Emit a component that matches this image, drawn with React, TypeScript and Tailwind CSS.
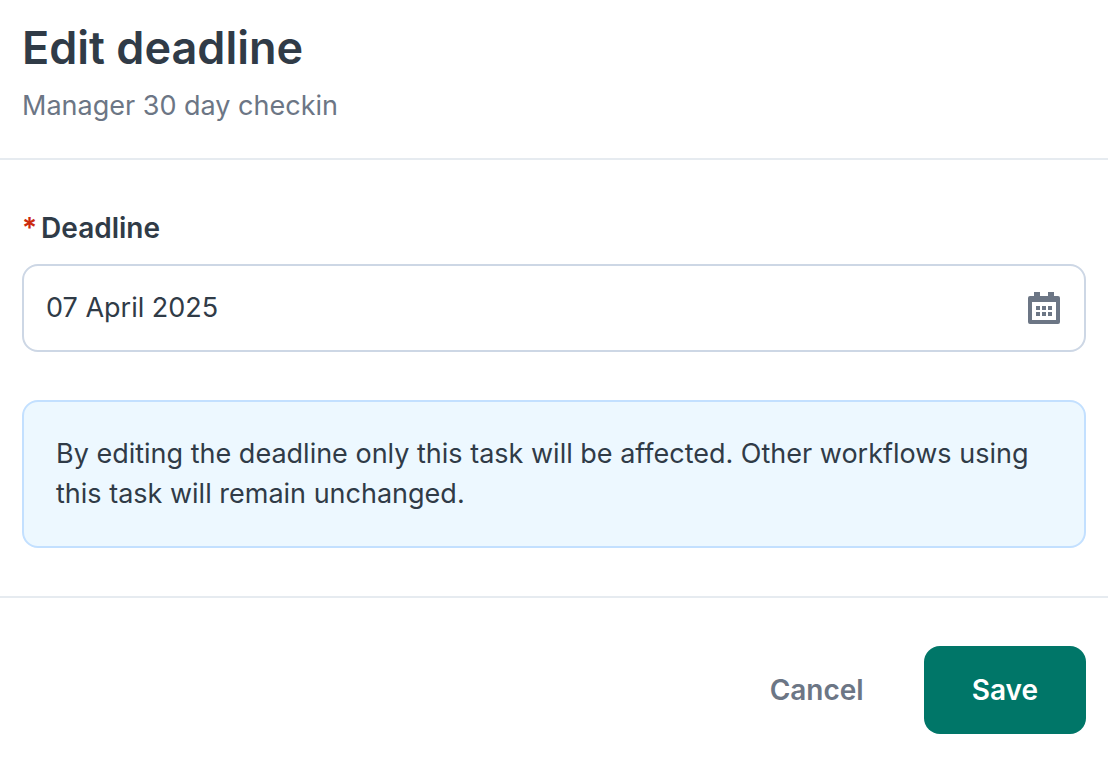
import { FormEvent, useState } from 'react';

function CalendarIcon() {
  return (
    <svg viewBox="0 0 32 32" className="size-8" aria-hidden="true">
      <path
        fill="currentColor"
        fillRule="evenodd"
        d="M6 0h6v4h8V0h6v4h4a2 2 0 0 1 2 2v24a2 2 0 0 1-2 2H2a2 2 0 0 1-2-2V6a2 2 0 0 1 2-2h4zM4 10v18h24V10z"
      />
      <path
        fill="currentColor"
        d="M8 14h4v4H8zM14 14h4v4h-4zM20 14h4v4h-4zM8 20h4v4H8zM14 20h4v4h-4zM20 20h4v4h-4z"
      />
    </svg>
  );
}

export default function App() {
  const [deadline, setDeadline] = useState('07 April 2025');

  const onSubmit = (e: FormEvent) => e.preventDefault();

  return (
    <form
      onSubmit={onSubmit}
      className="bg-white font-['Inter',sans-serif] text-[27px] leading-10 text-[#303b47]"
    >
      <header className="border-b-2 border-[#e6ebf0] px-[22px] pt-5 pb-8">
        <h1 className="text-[45px] leading-14 font-semibold">Edit deadline</h1>
        <p className="mt-[10px] text-[#6c7685]">Manager 30 day checkin</p>
      </header>

      <div className="border-b-2 border-[#e6ebf0] px-[22px] py-12">
        <label htmlFor="deadline" className="flex gap-1 text-[28px] font-semibold">
          <span className="text-[#cc2a0e]">*</span>
          Deadline
        </label>
        <div className="mt-4 flex h-22 items-center rounded-2xl border-2 border-[#cdd7e5] pr-6 pl-[22px]">
          <input
            id="deadline"
            type="text"
            required
            value={deadline}
            onChange={(e) => setDeadline(e.target.value)}
            className="min-w-0 flex-1 outline-none"
          />
          <button type="button" aria-label="Open calendar" className="text-[#6c7685]">
            <CalendarIcon />
          </button>
        </div>

        <p className="mt-12 rounded-2xl border-2 border-[#c3e0ff] bg-[#edf8ff] p-8">
          By editing the deadline only this task will be affected. Other workflows using this task
          will remain unchanged.
        </p>
      </div>

      <footer className="flex justify-end gap-3 px-[22px] pt-12 pb-6 text-[28px] font-semibold">
        <button type="button" className="h-22 px-12 text-[#6c7685]">
          Cancel
        </button>
        <button type="submit" className="h-22 rounded-2xl bg-[#007668] px-12 text-white">
          Save
        </button>
      </footer>
    </form>
  );
}
